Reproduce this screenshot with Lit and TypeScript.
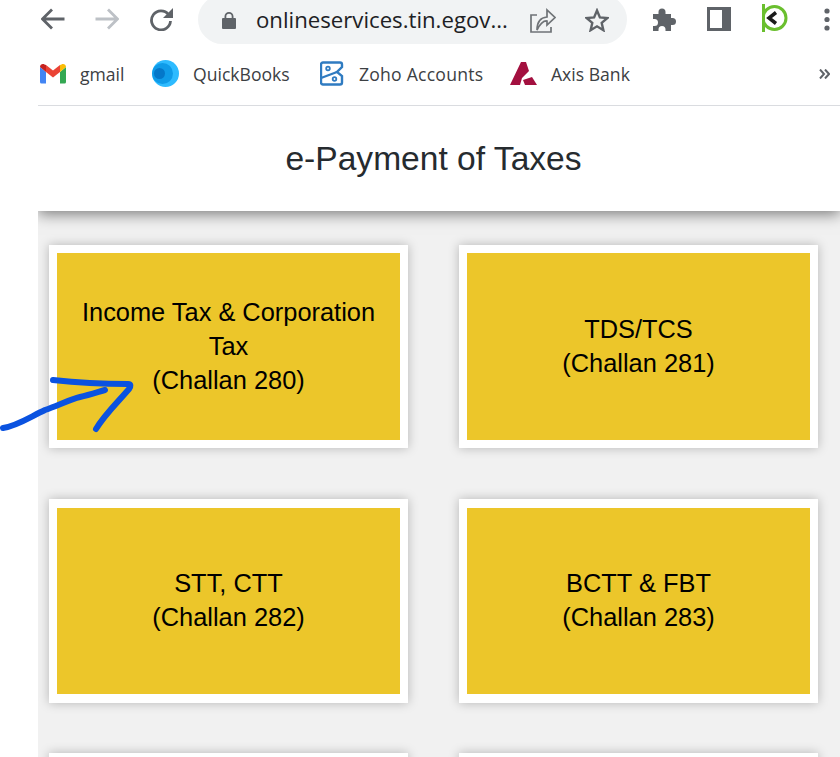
import { LitElement, html, css } from "lit";
import { customElement } from "lit/decorators.js";

const cards = [
  ["Income Tax & Corporation Tax", "(Challan 280)"],
  ["TDS/TCS", "(Challan 281)"],
  ["STT, CTT", "(Challan 282)"],
  ["BCTT & FBT", "(Challan 283)"],
  ["", ""],
  ["", ""],
];

@customElement("app-root")
export class AppRoot extends LitElement {
  static styles = css`
    :host { display: block; width: 840px; height: 757px; overflow: hidden; position: relative; background: #fff; font-family: "Liberation Sans", Arial, sans-serif; }
    .toolbar { height: 44px; display: flex; align-items: flex-start; }
    .tb-icon { flex: none; display: block; }
    .back { margin: 8px 0 0 41px; }
    .fwd { margin: 8px 0 0 30px; }
    .reload { margin: 8px 0 0 31px; }
    .omnibox { flex: none; width: 429px; height: 49px; margin: -5px 0 0 24px; background: #f1f3f4; border-radius: 25px; display: flex; align-items: flex-start; box-sizing: border-box; padding-left: 24px; }
    .lock { margin-top: 17px; }
    .url { margin: 10px 0 0 20px; font: 22.2px/30px "Open Sans", "Noto Sans", sans-serif; color: #202124; width: 258px; white-space: nowrap; }
    .share { margin: 13px 0 0 16px; }
    .star { margin: 13px 0 0 29px; }
    .puzzle { margin: 8px 0 0 25px; }
    .side { margin: 7px 0 0 31px; }
    .ext { margin: 4px 0 0 31px; }
    .dots { margin: 8px 0 0 36px; }
    .bookmarks { height: 61px; display: flex; align-items: center; box-sizing: border-box; padding: 0 0 2px 40px; font: 17.6px/24px "Open Sans", "Noto Sans", sans-serif; color: #3c4043; }
    .bm { display: flex; align-items: center; flex: none; }
    .bm span { white-space: nowrap; }
    .bm svg { flex: none; }
    .b-gmail { width: 112px; }
    .b-gmail svg { margin-right: 14px; }
    .b-qb { width: 168px; }
    .b-qb svg { margin-right: 14px; }
    .b-zoho { width: 190px; letter-spacing: .22px; }
    .b-zoho svg { margin-right: 15px; }
    .b-axis svg { margin-right: 14px; }
    .more { margin-left: auto; margin-right: 10px; }
    .divider { height: 1px; background: #dadce0; margin-left: 38px; }
    .page { margin-left: 38px; background: #f1f1f1; height: 651px; }
    .head { height: 105px; background: #fff; box-shadow: 0 3px 14px rgba(0,0,0,.5); clip-path: inset(0 0 -30px 0); display: flex; align-items: center; justify-content: center; box-sizing: border-box; padding-right: 11px; font-size: 33.6px; color: #262b2f; }
    .grid { display: grid; grid-template-columns: 359px 359px; column-gap: 51px; row-gap: 50.8px; padding: 34px 0 0 11px; }
    .card { background: #fff; height: 203.4px; padding: 8.4px 8px; box-sizing: border-box; box-shadow: 0 0 10px rgba(0,0,0,.25); }
    .tile { background: #ecc62a; height: 100%; display: flex; flex-direction: column; justify-content: center; align-items: center; text-align: center; font-size: 25.4px; line-height: 34px; color: #000; padding: 0 12px 2px; box-sizing: border-box; }
    .arrow { position: absolute; left: 0; top: 370px; pointer-events: none; }
  `;

  render() {
    return html`
      <div class="toolbar">
        <svg class="tb-icon back" width="24" height="22" viewBox="0 0 24 22" fill="none" stroke="#5f6368" stroke-width="2.8"><path d="M23.500 11H2.500M11 1.500L1.500 11l9.500 9.500"/></svg>
        <svg class="tb-icon fwd" width="24" height="22" viewBox="0 0 24 22" fill="none" stroke="#bdc1c6" stroke-width="2.8"><path d="M.5 11h21M13 1.500l9.500 9.500-9.500 9.500"/></svg>
        <svg class="tb-icon reload" width="24" height="23" viewBox="0 0 24 23"><path d="M18.500 6.500A9.500 9.500 0 1 0 20.500 13" fill="none" stroke="#5f6368" stroke-width="2.800"/><path d="M23 0V10H13z" fill="#5f6368"/></svg>
        <div class="omnibox">
          <svg class="tb-icon lock" width="14" height="17" viewBox="0 0 14 17"><path d="M2.500 6V4.500a4.500 4.500 0 0 1 9 0V6H13a1 1 0 0 1 1 1v9a1 1 0 0 1-1 1H1a1 1 0 0 1-1-1V7a1 1 0 0 1 1-1zM4.300 6h5.400V4.500a2.700 2.700 0 0 0-5.400 0z" fill="#5f6368"/></svg>
          <div class="url">onlineservices.tin.egov...</div>
          <svg class="tb-icon share" width="26" height="25" viewBox="0 0 26 25" fill="none" stroke="#6f7377" stroke-width="1.700"><path d="M7 7H1v17h20v-5"/><path d="M7 22C7 14 11 9.500 17 9V2l8 7.500L17 17v-4c-4-.5-7 3-10 9z"/></svg>
          <svg class="tb-icon star" width="24" height="24" viewBox="0 0 24 24" fill="none" stroke="#5f6368" stroke-width="2.400"><path d="M12 2.500l2.900 6.900 7.500.6-5.700 4.900 1.700 7.300-6.400-3.900-6.400 3.900 1.700-7.300L1.600 10l7.500-.6z"/></svg>
        </div>
        <svg class="tb-icon puzzle" width="24" height="24" viewBox="0 0 24 24"><path d="M1 6H6.500V4a3.500 3.500 0 0 1 7 0V6H19V10H20.500a3.500 3.500 0 0 1 0 7H19V23H13.500V21.500a3.500 3.500 0 0 0-7 0V23H1V18H2.500a3.500 3.500 0 0 0 0-7H1z" fill="#5f6368"/></svg>
        <svg class="tb-icon side" width="24" height="24" viewBox="0 0 24 24"><path d="M0 0h24v24H0zM3 3v18h12V3z" fill="#5f6368" fill-rule="evenodd"/></svg>
        <svg class="tb-icon ext" width="26" height="28" viewBox="0 0 26 28"><circle cx="12.500" cy="14" r="11.500" fill="none" stroke="#6abf2e" stroke-width="3"/><path d="M1.500 0v28" stroke="#6abf2e" stroke-width="3"/><path d="M14 8.500L7 14l7 5.500" fill="none" stroke="#1b1b1b" stroke-width="3.500"/></svg>
        <svg class="tb-icon dots" width="6" height="24" viewBox="0 0 6 24"><g fill="#5f6368"><circle cx="3" cy="3" r="2.600"/><circle cx="3" cy="11.500" r="2.600"/><circle cx="3" cy="20" r="2.600"/></g></svg>
      </div>
      <div class="bookmarks">
        <div class="bm b-gmail">
          <svg width="26" height="20" viewBox="0 0 26 20"><path d="M0 3v15a1.500 1.500 0 0 0 1.500 1.500H6V8z" fill="#4285f4"/><path d="M20 8v11.500h4.500A1.500 1.500 0 0 0 26 18V3z" fill="#34a853"/><path d="M20 1v7l6-5c0-2.500-2.500-3.500-4.500-2.500z" fill="#fbbc04"/><path d="M6 8V1l7 5.500L20 1v7l-7 5.500z" fill="#ea4335"/><path d="M0 3l6 5V1L4.500.500C2.500-.500 0 .500 0 3z" fill="#c5221f"/></svg>
          <span>gmail</span>
        </div>
        <div class="bm b-qb">
          <svg width="27" height="27" viewBox="0 0 27 27"><circle cx="13.500" cy="13.500" r="13.500" fill="#2ebbff"/><circle cx="10.500" cy="13.500" r="10.500" fill="#0f9be8"/><circle cx="7.500" cy="13.500" r="5.500" fill="#0477c9"/></svg>
          <span>QuickBooks</span>
        </div>
        <div class="bm b-zoho">
          <svg width="24" height="25" viewBox="0 0 24 25" fill="none" stroke="#2f7bc1" stroke-width="2.400"><path d="M3 1.500H20a2 2 0 0 1 2 2V6L17 11l5 4v6.500a2 2 0 0 1-2 2H3a2 2 0 0 1-2-2V3.500a2 2 0 0 1 2-2z"/><path d="M1 17L17 11"/><circle cx="8" cy="7.500" r="1.800" stroke-width="1.800"/><circle cx="14.500" cy="18" r="1.800" stroke-width="1.800"/></svg>
          <span>Zoho Accounts</span>
        </div>
        <div class="bm b-axis">
          <svg width="27" height="23" viewBox="0 0 27 23"><path d="M0 23L11 0h5l3 9-7 7-2 7zM13 18l9-3 5 8H15z" fill="#a3103f"/></svg>
          <span>Axis Bank</span>
        </div>
        <svg class="more" width="11" height="10" viewBox="0 0 11 10" fill="none" stroke="#5f6368" stroke-width="2"><path d="M1 .5L5 5 1 9.500M6 .5L10 5 6 9.500"/></svg>
      </div>
      <div class="divider"></div>
      <div class="page">
        <div class="head">e-Payment of Taxes</div>
        <div class="grid">
          ${cards.map(
            ([a, b]) => html`<div class="card"><div class="tile"><div>${a}</div><div>${b}</div></div></div>`
          )}
        </div>
      </div>
      <svg class="arrow" width="140" height="70" viewBox="0 0 140 70" fill="none" stroke="#0a52e0" stroke-width="6" stroke-linecap="round" stroke-linejoin="round">
        <path d="M3 58c14-2 27-11 42-18 14-5 26-11 35-13 9-2 18-5 25-7"/>
        <path d="M53 10C80 13 110 14 128 14c3 0 3 2 1 5C118 32 105 44 96 59"/>
      </svg>
    `;
  }
}
